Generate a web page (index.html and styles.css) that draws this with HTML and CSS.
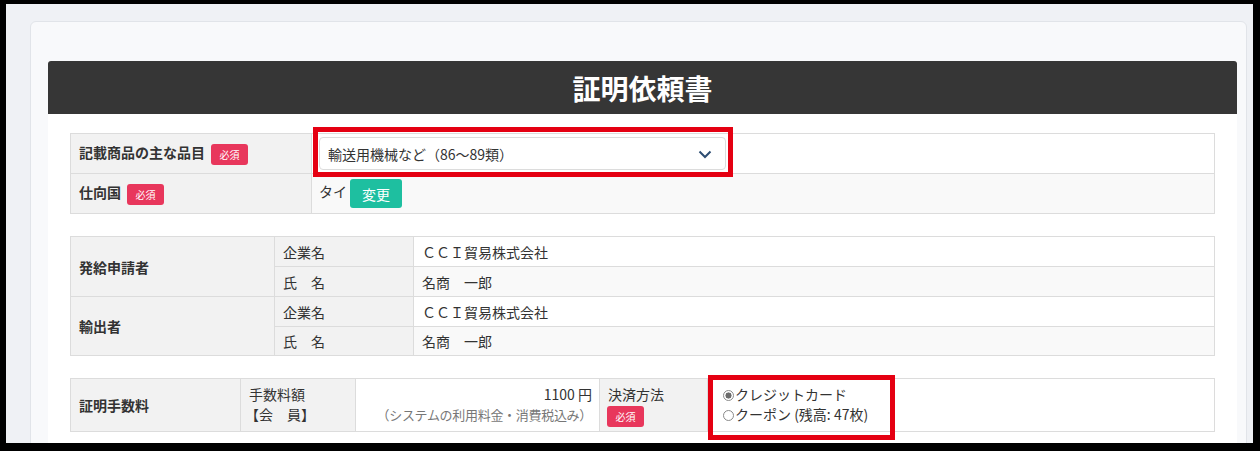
FILE: index.html
```html
<!DOCTYPE html>
<html lang="ja">
<head>
<meta charset="utf-8">
<title>証明依頼書</title>
<link rel="stylesheet" href="styles.css">
</head>
<body>
<div class="screen">
  <div class="card">
    <div class="panel">
      <h1 class="title">証明依頼書</h1>
      <div class="body">
        <table class="tbl t1">
          <colgroup><col class="c1-1"><col></colgroup>
          <tr class="r1">
            <th>記載商品の主な品目<span class="req">必須</span></th>
            <td class="sel-cell">
              <div class="select-wrap">
                <select class="select">
                  <option>輸送用機械など（86〜89類）</option>
                </select>
                <svg class="chev" width="14" height="9" viewBox="0 0 14 9"><path d="M1.5 1.5 L7 7 L12.5 1.5" fill="none" stroke="#2d4d72" stroke-width="2"/></svg>
              </div>
            </td>
          </tr>
          <tr class="r2">
            <th>仕向国<span class="req">必須</span></th>
            <td class="alt">タイ<button class="btn">変更</button></td>
          </tr>
        </table>

        <table class="tbl t2">
          <colgroup><col class="c2-1"><col class="c2-2"><col></colgroup>
          <tr>
            <th rowspan="2">発給申請者</th>
            <td class="sub">企業名</td>
            <td>ＣＣＩ貿易株式会社</td>
          </tr>
          <tr>
            <td class="sub">氏　名</td>
            <td class="alt">名商　一郎</td>
          </tr>
          <tr>
            <th rowspan="2">輸出者</th>
            <td class="sub">企業名</td>
            <td>ＣＣＩ貿易株式会社</td>
          </tr>
          <tr class="last">
            <td class="sub">氏　名</td>
            <td class="alt">名商　一郎</td>
          </tr>
        </table>

        <table class="tbl t3">
          <colgroup><col class="c3-1"><col class="c3-2"><col class="c3-3"><col class="c3-4"><col></colgroup>
          <tr>
            <th>証明手数料</th>
            <td class="sub top">手数料額<br><span class="member">【会　員】</span></td>
            <td class="top right">1100 円<br><span class="note">（システムの利用料金・消費税込み）</span></td>
            <td class="sub top">決済方法<br><span class="req req-block">必須</span></td>
            <td class="top pay">
              <label class="opt"><input class="radio" type="radio" name="pay" checked>クレジットカード</label>
              <label class="opt"><input class="radio" type="radio" name="pay">クーポン (残高: 47枚)</label>
            </td>
          </tr>
        </table>

        <div class="mark mark1"></div>
        <div class="mark mark2"></div>
      </div>
    </div>
  </div>
</div>
</body>
</html>
```

FILE: styles.css
```css
* { box-sizing: border-box; }
html, body { margin: 0; }
body {
  background: #000;
  padding: 4px 7px 8px 6px;
  font-family: "Noto Sans CJK JP", "Noto Sans", sans-serif;
  color: #333;
  font-size: 14px;
}
.screen {
  height: 439px;
  background: #eff1f5;
  padding: 17px 0 0 24px;
  overflow: hidden;
}
.card {
  background: #f8f9fb;
  border: 1px solid #e1e4e9;
  border-radius: 6px;
  margin-right: 6px;
  padding: 39px 9px 0 17px;
  height: 470px;
}
.panel { background: #fff; height: 420px; }
.title {
  margin: 0;
  background: #363636;
  color: #fff;
  height: 53px;
  display: flex;
  align-items: center;
  justify-content: center;
  font-size: 28px;
  font-weight: 700;
  border-radius: 3px 3px 0 0;
}
.body {
  position: relative;
  padding: 19px 22px 0;
  display: flex;
  flex-direction: column;
  gap: 22px;
}
.tbl {
  width: 100%;
  border-collapse: collapse;
  table-layout: fixed;
  line-height: 20px;
}
.tbl th, .tbl td {
  border: 1px solid #dcdcdc;
  padding: 0 8px;
  text-align: left;
  vertical-align: middle;
  background: #fff;
  font-weight: 400;
  white-space: nowrap;
}
.tbl th { background: #f2f2f2; font-weight: 700; }
.tbl td.sub { background: #f2f2f2; }
.tbl td.alt { background: #f9f9f9; }

.c1-1 { width: 241px; }
.t1 .r1 { height: 40px; }
.t1 .r2 { height: 40px; }
.sel-cell { padding: 0 6px 0 7px !important; }
.select-wrap { position: relative; width: 407px; }
.select {
  appearance: none;
  -webkit-appearance: none;
  width: 100%;
  height: 33px;
  border: 1px solid #dcdcdc;
  border-radius: 4px;
  background: #fff;
  padding: 0 8px;
  font-family: inherit;
  font-size: 14px;
  color: #333;
  display: block;
}
.chev { position: absolute; right: 14px; top: 13px; pointer-events: none; }
.t1 .r2 td { padding-left: 7px; }
.btn {
  margin-left: 3px;
  width: 52px;
  height: 29px;
  border: none;
  border-radius: 3px;
  background: #1ebfa0;
  color: #fff;
  font-family: inherit;
  font-size: 14px;
  vertical-align: middle;
}

.req {
  display: inline-block;
  width: 37px;
  height: 21px;
  line-height: 21px;
  margin-left: 6px;
  background: #e8375c;
  color: #fff;
  font-size: 10px;
  font-weight: 400;
  text-align: center;
  border-radius: 3px;
  vertical-align: middle;
}
.req-block { margin: 1px 0 0 -1px; }

.c2-1 { width: 204px; }
.c2-2 { width: 139px; }
.t2 tr { height: 30px; }
.t2 tr.last { height: 29px; }

.c3-1 { width: 170px; }
.c3-2 { width: 115px; }
.c3-3 { width: 244px; }
.c3-4 { width: 108px; }
.t3 tr { height: 53px; }
.tbl td.top { vertical-align: top; padding-top: 5px; }
.member { margin-left: -4px; }
.tbl td.right { text-align: right; padding-right: 7px; }
.note { color: #777; font-size: 13px; letter-spacing: -0.3px; }
.pay { padding-left: 15px !important; }
.opt { display: block; line-height: 20px; }
.radio {
  appearance: none;
  -webkit-appearance: none;
  width: 11px;
  height: 11px;
  margin: 0 1px 0 0;
  border: 1px solid #8a8a8a;
  border-radius: 50%;
  background: #fff;
  vertical-align: -1px;
}
.radio:checked {
  background: radial-gradient(circle, #6b6b6b 0 2.8px, #fff 3.3px);
}

.mark {
  position: absolute;
  border: 5px solid #e50012;
  pointer-events: none;
}
.mark1 { left: 265px; top: 13px; width: 420px; height: 50px; }
.mark2 { left: 660px; top: 261px; width: 187px; height: 65px; }
```
